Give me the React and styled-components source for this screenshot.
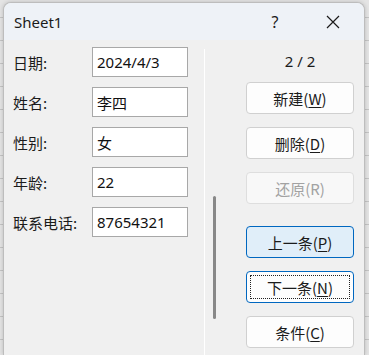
import React from 'react'
import styled, { createGlobalStyle } from 'styled-components'

const Global = createGlobalStyle`
  html, body {
    margin: 0;
    padding: 0;
    overflow: hidden;
  }
  body {
    width: 369px;
    height: 355px;
    background-color: #e4e4e4;
    background-image: repeating-linear-gradient(
      to bottom,
      transparent 0px,
      transparent 21px,
      #c4c4c4 21px,
      #c4c4c4 22px,
      transparent 22px,
      transparent 23px
    );
    background-position: 0 -4px;
    font-family: "Noto Sans", "Noto Sans CJK SC", sans-serif;
  }
`

const Window = styled.div`
  margin: 2px 0 0 3px;
  width: 360px;
  height: 352px;
  border: 1px solid #bdbdbd;
  border-bottom: none;
  border-radius: 8px 8px 0 0;
  overflow: hidden;
  background: #f0f0f0;
  box-shadow: 0 0 4px rgba(0, 0, 0, 0.18);
  display: flex;
  flex-direction: column;
`

const TitleBar = styled.div`
  height: 37px;
  flex: 0 0 37px;
  background: #eef2f7;
  display: flex;
  align-items: center;
  padding-left: 10px;
  color: #1b1b1b;
`

const Title = styled.div`
  flex: 1;
  font-size: 15px;
  font-family: "Noto Sans", sans-serif;
`

const Help = styled.div`
  width: 20px;
  margin-right: 40px;
  text-align: center;
  font-size: 16px;
  font-family: "Noto Sans", sans-serif;
`

const Close = styled.div`
  width: 16px;
  margin-right: 23px;
  display: flex;
  align-items: center;
  justify-content: center;
`

const Body = styled.div`
  flex: 1;
  display: grid;
  grid-template-columns: 200px 42px 108px;
`

const Fields = styled.div`
  padding: 7px 0 0 9px;
  display: flex;
  flex-direction: column;
  gap: 10px;
`

const Row = styled.div`
  display: flex;
  align-items: center;
  height: 30px;
`

const Label = styled.div`
  width: 79px;
  font-size: 15px;
  color: #1b1b1b;
  font-family: "Noto Sans CJK SC", "Noto Sans", sans-serif;
`

const Input = styled.div`
  box-sizing: border-box;
  width: 96px;
  height: 30px;
  border: 1px solid #a8a8a8;
  background: #ffffff;
  padding: 0 4px;
  display: flex;
  align-items: center;
  font-size: 15px;
  color: #111;
  font-family: "Noto Sans", "Noto Sans CJK SC", sans-serif;
`

const Track = styled.div`
  margin-top: 9px;
  border-left: 1px solid #ffffff;
  padding-left: 8px;
`

const Thumb = styled.div`
  margin-top: 147px;
  width: 3px;
  height: 123px;
  border-radius: 2px;
  background: #888888;
`

const Side = styled.div`
  padding-top: 8px;
  display: flex;
  flex-direction: column;
`

const Counter = styled.div`
  height: 26px;
  line-height: 26px;
  text-align: center;
  font-size: 15px;
  color: #1b1b1b;
  margin-bottom: 8px;
`

const Group = styled.div`
  display: flex;
  flex-direction: column;
  gap: 13px;
  margin-bottom: ${p => (p.$spaced ? '22px' : '0')};
`

const Button = styled.div`
  position: relative;
  box-sizing: border-box;
  height: 32px;
  border-radius: 4px;
  border: 1px solid ${p => (p.$blue ? '#0067c0' : p.$disabled ? '#dedede' : '#d0d0d0')};
  background: ${p => (p.$pressed ? '#e0eef9' : p.$disabled ? '#f8f8f8' : '#fdfdfd')};
  color: ${p => (p.$disabled ? '#a2a2a2' : '#1b1b1b')};
  display: flex;
  align-items: center;
  justify-content: center;
  font-size: 15px;
  font-family: "Noto Sans CJK SC", "Noto Sans", sans-serif;

  u {
    text-underline-offset: 2px;
  }
`

const Focus = styled.div`
  position: absolute;
  inset: 3px;
  border: 1px dotted #222;
  pointer-events: none;
`

const fields = [
  ['日期:', '2024/4/3'],
  ['姓名:', '李四'],
  ['性别:', '女'],
  ['年龄:', '22'],
  ['联系电话:', '87654321'],
]

export default function App() {
  return (
    <>
      <Global />
      <Window>
        <TitleBar>
          <Title>Sheet1</Title>
          <Help>?</Help>
          <Close>
            <svg width="14" height="14" viewBox="0 0 14 14">
              <path d="M1 1 L13 13 M13 1 L1 13" stroke="#1b1b1b" strokeWidth="1.2" fill="none" />
            </svg>
          </Close>
        </TitleBar>
        <Body>
          <Fields>
            {fields.map(([label, value]) => (
              <Row key={label}>
                <Label>{label}</Label>
                <Input>{value}</Input>
              </Row>
            ))}
          </Fields>
          <Track>
            <Thumb />
          </Track>
          <Side>
            <Counter>2 / 2</Counter>
            <Group $spaced>
              <Button>新建(<u>W</u>)</Button>
              <Button>删除(<u>D</u>)</Button>
              <Button $disabled>还原(R)</Button>
            </Group>
            <Group>
              <Button $blue $pressed>上一条(<u>P</u>)</Button>
              <Button $blue>
                下一条(<u>N</u>)
                <Focus />
              </Button>
              <Button>条件(<u>C</u>)</Button>
            </Group>
          </Side>
        </Body>
      </Window>
    </>
  )
}
